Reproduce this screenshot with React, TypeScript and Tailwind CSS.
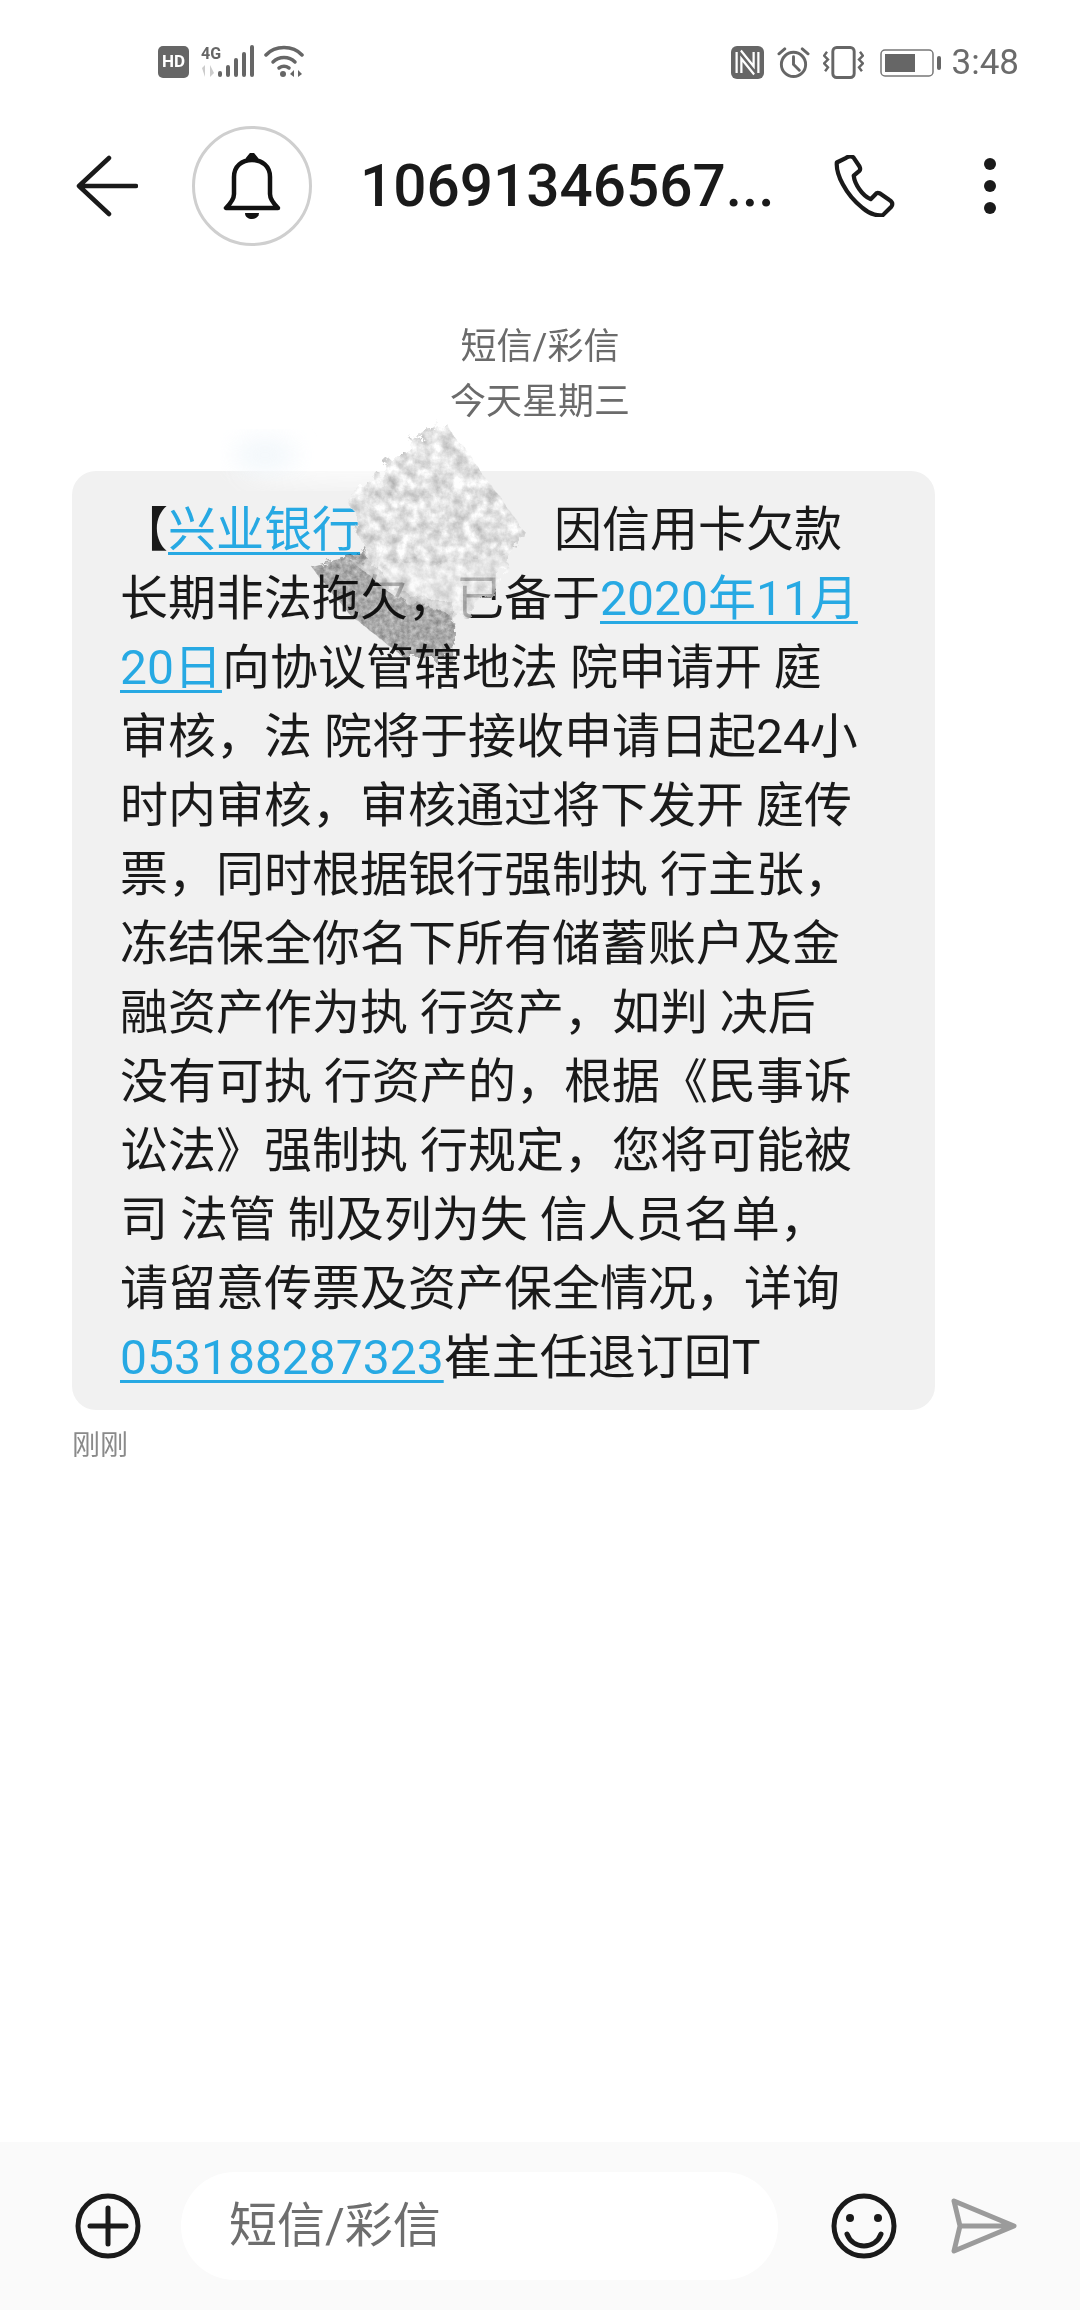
import React from 'react';

const cjk = "font-['Roboto','Noto_Sans_CJK_SC',sans-serif]";

function Link({ children }: { children: React.ReactNode }) {
  return <span className="text-[#27a9e3] underline decoration-[3px] underline-offset-[6px]">{children}</span>;
}

const lines: React.ReactNode[] = [
  <>【<Link>兴业银行</Link><span className="ml-[126px]">，</span><span className="ml-[20px]">因信用卡欠款</span></>,
  <>长期非法拖欠，已备于<Link>2020年11月</Link></>,
  <><Link>20日</Link>向协议管辖地法 院申请开 庭</>,
  '审核，法 院将于接收申请日起24小',
  '时内审核，审核通过将下发开 庭传',
  '票，同时根据银行强制执 行主张，',
  '冻结保全你名下所有储蓄账户及金',
  '融资产作为执 行资产，如判 决后',
  '没有可执 行资产的，根据《民事诉',
  '讼法》强制执 行规定，您将可能被',
  '司 法管 制及列为失 信人员名单，',
  '请留意传票及资产保全情况，详询',
  <><Link>053188287323</Link>崔主任退订回T</>,
];

function StatusBar() {
  return (
    <div className="flex h-[111px] items-start justify-between pl-[158px] pr-[61px] pt-[45px] text-[#666]">
      <div className="flex items-center">
        <span className="flex h-[32px] w-[31px] items-center justify-center rounded-[5px] bg-[#666] font-['Roboto',sans-serif] text-[17px] font-bold text-white">HD</span>
        <svg width="53" height="33" viewBox="0 0 53 33" fill="#666" className="ml-[12px]">
          <text x="0" y="14" fontSize="16" fontWeight="700" fontFamily="Roboto">4G</text>
          <path d="M4 32V20l-3 3zM9 20v12l4-4z" fill="#ccc" />
          <rect x="17" y="26" width="4" height="6" rx="2" />
          <rect x="25" y="20" width="4" height="12" rx="2" />
          <rect x="33" y="13" width="4" height="19" rx="2" />
          <rect x="41" y="7" width="4" height="25" rx="2" />
          <rect x="49" y="0" width="4" height="32" rx="2" />
        </svg>
        <svg width="40" height="33" viewBox="0 0 40 33" fill="none" stroke="#666" strokeWidth="3.5" strokeLinecap="round" className="ml-[10px]">
          <path d="M2 10C11 0 29 0 38 10" />
          <path d="M9 17c6-6 16-6 22 0" />
          <path d="M15 23c3-2 7-2 10 0" />
          <circle cx="19" cy="29" r="3" fill="#666" stroke="none" />
          <path d="M30 25l-4 4 4 3zM34 25v7l4-3z" fill="#666" stroke="none" />
        </svg>
      </div>
      <div className="flex items-center">
        <svg width="33" height="33" viewBox="0 0 33 33">
          <rect width="33" height="33" rx="6" fill="#666" />
          <path d="M8 6v21M8 6l17 21M25 6v21" stroke="#fff" strokeWidth="7" fill="none" />
          <path d="M8 4v25M8 6l17 21M25 4v25" stroke="#666" strokeWidth="2.5" fill="none" />
        </svg>
        <svg width="33" height="33" viewBox="0 0 34 34" fill="none" stroke="#666" strokeWidth="3" className="ml-[13px]">
          <circle cx="17" cy="19" r="12.5" />
          <path d="M17 11v8l6 6M2 8l6-5M32 8l-6-5" strokeLinecap="round" />
        </svg>
        <svg width="41" height="33" viewBox="0 0 42 34" fill="none" stroke="#666" strokeWidth="3" className="ml-[13px]">
          <rect x="10" y="1.5" width="22" height="31" rx="4" />
          <path d="M4 6l-3 4 4 4-4 4 4 4-3 4M38 6l3 4-4 4 4 4-4 4 3 4" strokeWidth="2.5" />
        </svg>
        <svg width="61" height="30" viewBox="0 0 61 30" className="ml-[16px]">
          <rect x="1" y="2" width="52" height="26" rx="4" fill="none" stroke="#777" strokeWidth="1.5" />
          <rect x="5" y="6" width="30" height="18" fill="#666" />
          <rect x="57" y="8" width="4" height="14" rx="2" fill="#666" />
        </svg>
        <span className="ml-[11px] font-['Roboto',sans-serif] text-[35px] leading-none text-[#6b6b6b]">3:48</span>
      </div>
    </div>
  );
}

function Header() {
  return (
    <div className="flex h-[150px] items-center pl-[76px] pr-[84px]">
      <svg width="62" height="62" viewBox="0 0 62 62" fill="none" stroke="#1a1a1a" strokeWidth="4.5" strokeLinecap="round" strokeLinejoin="round">
        <path d="M60 31H3M33 3L3 31l30 28" />
      </svg>
      <div className="ml-[54px] flex h-[120px] w-[120px] items-center justify-center rounded-full border-[3px] border-[#cfcfcf]">
        <svg width="60" height="66" viewBox="0 0 60 66" fill="none" stroke="#111" strokeWidth="4.5" strokeLinejoin="round">
          <path d="M4 55h52c-5-5-8-9-8-14V24C48 13 40 7 30 7S12 13 12 24v17c0 5-3 9-8 14z" />
          <path d="M26 6l4-5 4 5z" fill="#111" />
          <path d="M23 60h14c0 8-14 8-14 0z" fill="#111" stroke="none" />
        </svg>
      </div>
      <div className={`ml-[48px] w-[474px] text-[58.5px] font-medium leading-none text-[#1a1a1a] ${cjk}`}>10691346567...</div>
      <svg width="62" height="62" viewBox="0 0 66 66" fill="none" stroke="#1a1a1a" strokeWidth="4.5" strokeLinejoin="round">
        <path d="M13 3L3 8C2 20 12 42 30 56c9 8 18 9 22 8l9-9c2-3 1-5-2-7l-10-7c-2-1-4-1-5 1l-5 5C30 43 22 31 21 22l6-5c1-1 1-3 0-5L21 3c-2-2-5-2-8 0z" />
      </svg>
      <div className="ml-auto flex flex-col gap-[10px]">
        <div className="h-[12px] w-[12px] rounded-full bg-[#1a1a1a]" />
        <div className="h-[12px] w-[12px] rounded-full bg-[#1a1a1a]" />
        <div className="h-[12px] w-[12px] rounded-full bg-[#1a1a1a]" />
      </div>
    </div>
  );
}

// the scratched-out patch over the sender name
function Smudge() {
  return (
    <svg width="330" height="290" viewBox="0 0 330 290" className="absolute left-[220px] top-[400px]">
      <defs>
        <filter id="soft" x="-30%" y="-30%" width="160%" height="160%">
          <feGaussianBlur stdDeviation="12" />
        </filter>
        <filter id="cloud" x="-15%" y="-15%" width="130%" height="130%" colorInterpolationFilters="sRGB">
          <feTurbulence type="fractalNoise" baseFrequency="0.07" numOctaves="5" seed="7" result="n" />
          <feDisplacementMap in="SourceGraphic" in2="n" scale="20" result="shape" />
          <feTurbulence type="fractalNoise" baseFrequency="0.09" numOctaves="6" seed="3" result="g" />
          <feColorMatrix in="g" values="0.45 0 0 0 0.66  0.45 0 0 0 0.66  0.45 0 0 0 0.66  0 0 0 0 1" result="c" />
          <feComposite in="c" in2="shape" operator="in" />
        </filter>
        <filter id="dark" x="-15%" y="-15%" width="130%" height="130%" colorInterpolationFilters="sRGB">
          <feTurbulence type="fractalNoise" baseFrequency="0.07" numOctaves="5" seed="11" result="n" />
          <feDisplacementMap in="SourceGraphic" in2="n" scale="18" result="shape" />
          <feTurbulence type="fractalNoise" baseFrequency="0.2" numOctaves="5" seed="5" result="g" />
          <feColorMatrix in="g" values="0.4 0 0 0 0.5  0.4 0 0 0 0.5  0.4 0 0 0 0.5  0 0 0 0 1" result="c" />
          <feComposite in="c" in2="shape" operator="in" />
        </filter>
      </defs>
      <ellipse cx="130" cy="68" rx="110" ry="14" fill="#fff" opacity="0.85" filter="url(#soft)" />
      <ellipse cx="45" cy="55" rx="32" ry="16" fill="#eef5fa" opacity="0.8" filter="url(#soft)" />
      <path d="M90 165L150 150 170 190 236 205 234 258 185 258 130 215z" filter="url(#dark)" className="mix-blend-multiply" />
      <path d="M130 160L296 150 270 196 238 218 175 196z" filter="url(#cloud)" opacity="0.72" />
      <path d="M223 20L302 127 296 150 240 165 150 165 128 100 170 60z" filter="url(#cloud)" opacity="0.96" />
    </svg>
  );
}

function MessageBubble() {
  return (
    <div className="ml-[72px] mt-[41px] w-[863px] rounded-[24px] bg-[#f1f1f1] pb-[18px] pl-[48px] pt-[24px]">
      {lines.map((line, i) => (
        <div key={i} className="whitespace-pre text-[48px] leading-[69px] text-[#1a1a1a]">{line}</div>
      ))}
    </div>
  );
}

function InputBar() {
  return (
    <div className="mt-auto flex h-[168px] items-center bg-[#fafafa] pl-[75px] pr-[62px]">
      <svg width="66" height="66" viewBox="0 0 66 66" fill="none" stroke="#1a1a1a" strokeWidth="5">
        <circle cx="33" cy="33" r="30" />
        <path d="M33 15v36M15 33h36" strokeLinecap="round" />
      </svg>
      <div className="ml-[40px] flex h-[108px] w-[597px] items-center rounded-[54px] bg-white pl-[48px] text-[48px] text-[#6e6e6e]">短信/彩信</div>
      <svg width="66" height="66" viewBox="0 0 66 66" fill="none" stroke="#1a1a1a" strokeWidth="5" className="ml-[53px]">
        <circle cx="33" cy="33" r="30" />
        <circle cx="19" cy="25" r="4" fill="#1a1a1a" stroke="none" />
        <circle cx="47" cy="25" r="4" fill="#1a1a1a" stroke="none" />
        <path d="M16 41c6 16 28 16 34 0" strokeLinecap="round" />
      </svg>
      <svg width="66" height="56" viewBox="0 0 66 56" fill="none" stroke="#9b9b9b" strokeWidth="5" strokeLinejoin="round" className="ml-[54px]">
        <path d="M3 3L63 28 3 53l6-25zM9 28h54" />
      </svg>
    </div>
  );
}

export default function App() {
  return (
    <div className={`relative flex h-[2310px] w-[1080px] flex-col overflow-hidden bg-white ${cjk}`}>
      <StatusBar />
      <Header />
      <div className="mt-[59px] flex flex-col items-center text-[36px] leading-[55px] text-[#6b6b6b]">
        <div>短信/彩信</div>
        <div>今天星期三</div>
      </div>
      <MessageBubble />
      <div className="ml-[72px] mt-[17px] text-[28px] leading-[38px] text-[#8a8a8a]">刚刚</div>
      <Smudge />
      <InputBar />
    </div>
  );
}
